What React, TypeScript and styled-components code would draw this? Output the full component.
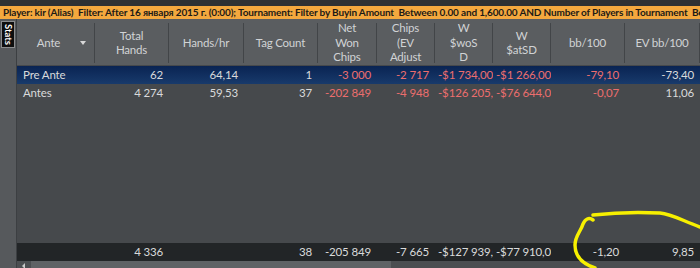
import React from "react";
import styled, { createGlobalStyle } from "styled-components";

const GlobalStyle = createGlobalStyle`
  html, body {
    margin: 0;
    padding: 0;
    background: #3a3d40;
  }
  body {
    font-family: Lato, "Noto Sans", sans-serif;
  }
`;

const columnWidths = [78, 74, 75, 74, 59, 58, 58, 58, 74, 75];
const gridTemplate = columnWidths.map((w) => `${w}px`).join(" ");

const headers: string[][] = [
    ["Ante"],
    ["Total", "Hands"],
    ["Hands/hr"],
    ["Tag Count"],
    ["Net", "Won", "Chips"],
    ["Chips", "(EV", "Adjust"],
    ["W", "$woS", "D"],
    ["W", "$atSD"],
    ["bb/100"],
    ["EV bb/100"],
];

interface StatRow {
    name: string;
    values: string[];
    selected?: boolean;
}

const rows: StatRow[] = [
    {
        name: "Pre Ante",
        values: ["62", "64,14", "1", "-3 000", "-2 717", "-$1 734,00", "-$1 266,00", "-79,10", "-73,40"],
        selected: true,
    },
    {
        name: "Antes",
        values: ["4 274", "59,53", "37", "-202 849", "-4 948", "-$126 205,00", "-$76 644,00", "-0,07", "11,06"],
    },
];

const totals = ["4 336", "", "38", "-205 849", "-7 665", "-$127 939,00", "-$77 910,00", "-1,20", "9,85"];

// columns (after the name) where negative money is painted red
const redColumns = [3, 4, 5, 6, 7];

const Page = styled.div`
    position: relative;
    width: 700px;
    height: 268px;
    display: flex;
    flex-direction: column;
    overflow: hidden;
    background: #3a3d40;
`;

const TopStrip = styled.div`
    height: 6px;
    background: #2f3133;
`;

const FilterBar = styled.div`
    height: 13px;
    line-height: 13px;
    padding: 0 3px;
    background: #f4a83e;
    color: #1c1a16;
    font-size: 10px;
    font-weight: 700;
    letter-spacing: -0.15px;
    white-space: pre;
    overflow: hidden;
`;

const Main = styled.div`
    flex: 1;
    display: flex;
    min-height: 0;
`;

const SideRail = styled.div`
    width: 16px;
    background: #56595c;
    border-right: 1px solid #3c3f42;
    display: flex;
    flex-direction: column;
    align-items: center;
    padding-top: 2px;
`;

const StatsTab = styled.div`
    writing-mode: vertical-rl;
    width: 12px;
    height: 25px;
    background: #0e0e0e;
    border: 1px solid #8b8d8f;
    color: #ffffff;
    font-size: 9.5px;
    font-weight: 700;
    line-height: 12px;
    text-align: center;
`;

const Grid = styled.div`
    flex: 1;
    display: flex;
    flex-direction: column;
    min-width: 0;
`;

const HeaderRow = styled.div`
    display: grid;
    grid-template-columns: ${gridTemplate};
    height: 46px;
    background: #5a5d60;
`;

const HeaderCell = styled.div`
    display: flex;
    align-items: center;
    justify-content: center;
    margin: 4px 0 2px;
    border-right: 1px solid #424548;
    color: #d1d3d5;
    font-size: 11.5px;
    letter-spacing: -0.2px;
    line-height: 14.5px;
    text-align: center;
    overflow: hidden;
`;

const HeaderLabel = styled.div`
    flex: 1;
`;

const SortArrow = styled.span`
    width: 0;
    height: 0;
    margin-right: 8px;
    border-left: 3.5px solid transparent;
    border-right: 3.5px solid transparent;
    border-top: 4px solid #d8d8d8;
`;

const Body = styled.div`
    flex: 1;
    padding-top: 1px;
    background: #46494c;
`;

const DataRow = styled.div<{ $selected?: boolean }>`
    display: grid;
    grid-template-columns: ${gridTemplate};
    height: 18px;
    background: ${(p) => (p.$selected ? "linear-gradient(#0a2453, #183a6b)" : "transparent")};
`;

const Cell = styled.div<{ $align?: "left" | "right"; $red?: boolean }>`
    padding: 0 6px 0 ${(p) => (p.$align === "left" ? 6 : 3)}px;
    text-align: ${(p) => p.$align || "right"};
    color: ${(p) => (p.$red ? "#ec6e6e" : "#d9dadb")};
    font-size: 11.5px;
    letter-spacing: -0.15px;
    line-height: 18px;
    white-space: nowrap;
    overflow: hidden;
`;

const TotalsRow = styled.div`
    display: grid;
    grid-template-columns: ${gridTemplate};
    height: 18px;
    background: #222527;
`;

const ScrollTrack = styled.div`
    height: 7px;
    display: flex;
    background: #4b4e51;
`;

const ScrollArrow = styled.div`
    width: 13px;
    display: flex;
    justify-content: center;
    padding-top: 2px;
    &::before {
        content: "";
        border-top: 3px solid transparent;
        border-bottom: 3px solid transparent;
        border-right: 3px solid #c8c8c8;
    }
`;

const ScrollThumb = styled.div`
    width: 360px;
    margin-left: 1px;
    background: #5f6265;
`;

const Scribble = styled.svg`
    position: absolute;
    left: 0;
    top: 0;
    pointer-events: none;
`;

const isNegative = (v: string) => v.startsWith("-");

export default function App() {
    return (
        <Page>
            <GlobalStyle />
            <TopStrip />
            <FilterBar>
                {"Player: kir (Alias)  Filter: After 16 января 2015 г. (0:00); Tournament: Filter by Buyin Amount  Between 0.00 and 1,600.00 AND Number of Players in Tournament  Between 0 and 10"}
            </FilterBar>
            <Main>
                <SideRail>
                    <StatsTab>Stats</StatsTab>
                </SideRail>
                <Grid>
                    <HeaderRow>
                        {headers.map((lines, i) => (
                            <HeaderCell key={i}>
                                <HeaderLabel>
                                    {lines.map((l, j) => (
                                        <div key={j}>{l}</div>
                                    ))}
                                </HeaderLabel>
                                {i === 0 && <SortArrow />}
                            </HeaderCell>
                        ))}
                    </HeaderRow>
                    <Body>
                        {rows.map((row) => (
                            <DataRow key={row.name} $selected={row.selected}>
                                <Cell $align="left">{row.name}</Cell>
                                {row.values.map((v, i) => (
                                    <Cell key={i} $red={redColumns.includes(i) && isNegative(v)}>
                                        {v}
                                    </Cell>
                                ))}
                            </DataRow>
                        ))}
                    </Body>
                    <TotalsRow>
                        <Cell />
                        {totals.map((v, i) => (
                            <Cell key={i}>{v}</Cell>
                        ))}
                    </TotalsRow>
                    <ScrollTrack>
                        <ScrollArrow />
                        <ScrollThumb />
                    </ScrollTrack>
                </Grid>
            </Main>
            <Scribble width={700} height={268} viewBox="0 0 700 268">
                <g fill="none" stroke="#f7f000" strokeWidth={3.5} strokeLinecap="round" strokeLinejoin="round">
                    <path d="M593 215 C610 213, 640 212, 660 213 C672 214, 683 221, 700 227" />
                    <path d="M593 220 C589 217, 585 219, 583 224 C581 231, 575 236, 575 245 C575 255, 580 263, 595 268" />
                </g>
            </Scribble>
        </Page>
    );
}
